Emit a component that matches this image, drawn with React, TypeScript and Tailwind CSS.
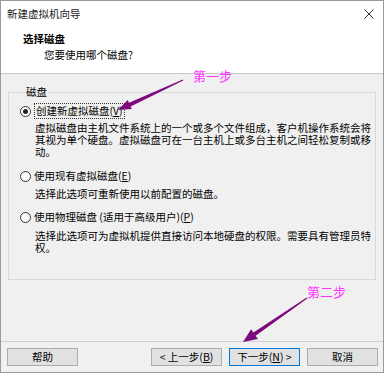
import React from 'react';

const FONT = { fontFamily: '"Noto Sans CJK SC", "Noto Sans", sans-serif' };

const Radio: React.FC<{ checked?: boolean }> = ({ checked }) => (
  <span className="w-[11px] h-[11px] rounded-full border border-[#333] bg-white flex items-center justify-center shrink-0">
    {checked && <span className="w-[5px] h-[5px] rounded-full bg-[#222]" />}
  </span>
);

const Btn: React.FC<{ children: React.ReactNode; primary?: boolean }> = ({ children, primary }) => (
  <div
    className={`w-[71px] h-[18px] flex items-center justify-center text-[10.5px] leading-none ${
      primary ? 'border border-[#0078d7] bg-[#e1e1e1]' : 'border border-[#adadad] bg-[#e1e1e1]'
    }`}
  >
    {children}
  </div>
);

const App: React.FC = () => {
  return (
    <div className="relative w-[386px] h-[374px] bg-white text-black" style={FONT}>
      <div className="w-[384px] h-[373px] border border-[#9a9a9a] flex flex-col">
        {/* header */}
        <div className="h-[73px] bg-white border-b border-[#c8c8c8] flex flex-col">
          <div className="h-[25px] flex items-center justify-between pl-[6px] pr-[8px]">
            <span className="text-[10.5px] leading-[14px] text-[#222]">新建虚拟机向导</span>
            <svg width="10" height="10" viewBox="0 0 10 10" className="mr-[1px]">
              <path d="M0.5 0.5 L9.5 9.5 M9.5 0.5 L0.5 9.5" stroke="#333" strokeWidth="1" fill="none" />
            </svg>
          </div>
          <div className="pl-[22px] mt-[6px] text-[10.5px] leading-[14px] font-bold">选择磁盘</div>
          <div className="pl-[43px] mt-[2px] text-[10.5px] leading-[14px]">您要使用哪个磁盘?</div>
        </div>

        {/* body */}
        <div className="flex-1 bg-[#f0f0f0] px-[7px] pt-[11px]">
          <fieldset className="border border-[#d8d8d8] h-[195px] pl-[11px] pr-[4px]">
            <legend className="ml-[5px] px-[1px] text-[10.5px] leading-[14px]">磁盘</legend>
            <div className="flex items-center h-[14px] mt-[5px]">
              <Radio checked />
              <span className="ml-[3px] px-[1px] border border-dotted border-[#333] text-[10.5px] leading-[14px]">
                创建新虚拟磁盘(<span className="underline">V</span>)
              </span>
            </div>
            <div className="pl-[15px] mt-[4px] text-[10.5px] leading-[12px] whitespace-nowrap">
              虚拟磁盘由主机文件系统上的一个或多个文件组成，客户机操作系统会将
              <br />
              其视为单个硬盘。虚拟磁盘可在一台主机上或多台主机之间轻松复制或移
              <br />
              动。
            </div>
            <div className="flex items-center h-[14px] mt-[11px]">
              <Radio />
              <span className="ml-[3px] text-[10.5px] leading-[14px]">
                使用现有虚拟磁盘(<span className="underline">E</span>)
              </span>
            </div>
            <div className="pl-[15px] mt-[5px] text-[10.5px] leading-[12px]">选择此选项可重新使用以前配置的磁盘。</div>
            <div className="flex items-center h-[14px] mt-[10px]">
              <Radio />
              <span className="ml-[3px] text-[10.5px] leading-[14px]">
                使用物理磁盘 (适用于高级用户)(<span className="underline">P</span>)
              </span>
            </div>
            <div className="pl-[15px] mt-[6px] text-[10.5px] leading-[12px] whitespace-nowrap">
              选择此选项可为虚拟机提供直接访问本地硬盘的权限。需要具有管理员特
              <br />
              权。
            </div>
          </fieldset>
        </div>

        {/* footer */}
        <div className="h-[31px] bg-[#f0f0f0] border-t border-[#d0d0d0] flex items-start pt-[6px] pl-[6px] pr-[5px]">
          <Btn>帮助</Btn>
          <div className="flex-1" />
          <div className="flex gap-[7px]">
            <Btn>&lt; 上一步(<span className="underline">B</span>)</Btn>
            <Btn primary>下一步(<span className="underline">N</span>) &gt;</Btn>
            <Btn>取消</Btn>
          </div>
        </div>
      </div>

      {/* annotations */}
      <span className="absolute left-[193px] top-[68px] text-[13px] leading-[16px] text-[#ff33ff]">第一步</span>
      <span className="absolute left-[307px] top-[284px] text-[13px] leading-[16px] text-[#ff33ff]">第二步</span>
      <svg className="absolute inset-0 pointer-events-none" width="386" height="374">
        <polygon
          fill="#7d0a7d"
          points="118,110 131.9,109.1 130.6,106.4 183.2,80.5 182.8,79.6 129,102.8 127.7,100.1"
        />
        <polygon
          fill="#7d0a7d"
          points="243,342 257.9,339 255.6,335.7 307.3,298.4 306.7,297.6 253.4,332.5 251.1,329.2"
        />
      </svg>
    </div>
  );
};

export default App;
